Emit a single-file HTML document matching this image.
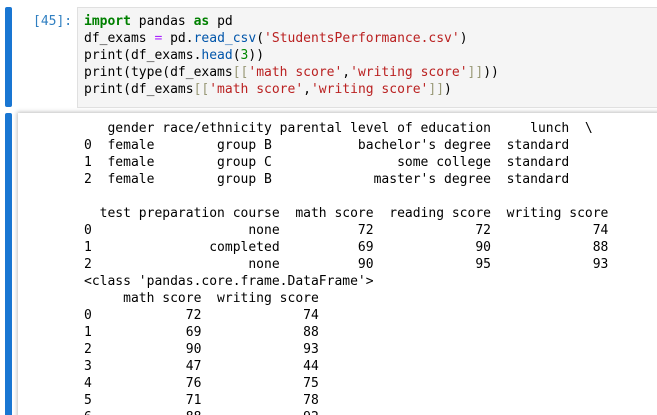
<!DOCTYPE html>
<html><head><style>
html,body{margin:0;width:657px;height:415px;overflow:hidden;background:#fff}
body{position:relative;font-family:"DejaVu Sans Mono","Liberation Mono",monospace;font-size:13px}
.bar{position:absolute;left:5px;width:7px;background:#1976d2;border-radius:2px}
.prompt{position:absolute;left:33px;top:13px;color:#307fc1;line-height:17px}
.code{position:absolute;left:77px;top:7px;width:600px;height:99px;background:#f5f5f5;border:1px solid #e0e0e0}
pre{margin:0;font:inherit;line-height:17px;white-space:pre;color:#000}
.code pre{position:absolute;left:6px;top:5px}
.k{color:#008000;font-weight:bold}.o{color:#aa22ff}.f{color:#0055aa}.s{color:#ba2121}.n{color:#080}.b{color:#999977}
.out{position:absolute;left:18px;top:113px;width:660px;height:310px;background:#fff;box-shadow:0 0 4px 1px rgba(0,0,0,.25)}
.out pre{position:absolute;left:66px;top:7px}
</style></head><body>
<div class="bar" style="top:7px;height:100px"></div>
<div class="bar" style="top:113px;height:310px"></div>
<div class="prompt">[45]:</div>
<div class="code"><pre><span class="k">import</span> pandas <span class="k">as</span> pd
df_exams <span class="o">=</span> pd<span>.</span><span class="f">read_csv</span>(<span class="s">'StudentsPerformance.csv'</span>)
print(df_exams<span>.</span><span class="f">head</span>(<span class="n">3</span>))
print(type(df_exams<span class="b">[[</span><span class="s">'math score'</span>,<span class="s">'writing score'</span><span class="b">]]</span>))
print(df_exams<span class="b">[[</span><span class="s">'math score'</span>,<span class="s">'writing score'</span><span class="b">]]</span>)</pre></div>
<div class="out"><pre>   gender race/ethnicity parental level of education     lunch  \
0  female        group B           bachelor's degree  standard
1  female        group C                some college  standard
2  female        group B             master's degree  standard

  test preparation course  math score  reading score  writing score
0                    none          72             72             74
1               completed          69             90             88
2                    none          90             95             93
&lt;class 'pandas.core.frame.DataFrame'&gt;
     math score  writing score
0            72             74
1            69             88
2            90             93
3            47             44
4            76             75
5            71             78
6            88             92</pre></div>
</body></html>
